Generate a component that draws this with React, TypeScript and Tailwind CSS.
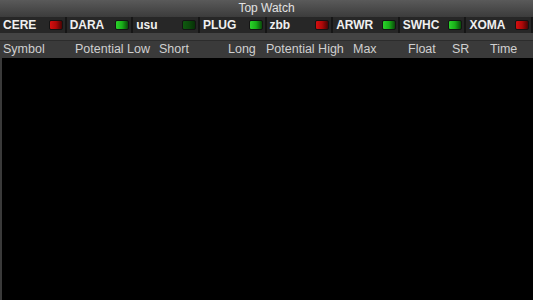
import React from "react";

type Tick = { sym: string; led: "red" | "green" | "dim" };

const ticks: Tick[] = [
  { sym: "CERE", led: "red" },
  { sym: "DARA", led: "green" },
  { sym: "usu", led: "dim" },
  { sym: "PLUG", led: "green" },
  { sym: "zbb", led: "red" },
  { sym: "ARWR", led: "green" },
  { sym: "SWHC", led: "green" },
  { sym: "XOMA", led: "red" },
];

const cols = ["Symbol", "Potential Low", "Short", "Long", "Potential High", "Max", "Float", "SR", "Time"];

function Led({ kind }: { kind: Tick["led"] }) {
  const cls = {
    red: "bg-gradient-to-r from-[#d41010] via-[#b00808] to-[#4a0404]",
    green: "bg-gradient-to-r from-[#2bd22b] via-[#18b018] to-[#0a4a0a]",
    dim: "bg-gradient-to-r from-[#0f5a0f] via-[#0c4a0c] to-[#073007]",
  }[kind];
  return <span className={`block h-[10px] w-[14px] rounded-[2px] border border-[#141414] ${cls}`} />;
}

export default function App() {
  return (
    <div className="flex h-[300px] w-[533px] flex-col overflow-hidden bg-black font-['Liberation_Sans',Arial,sans-serif]">
      <div className="h-[17px] bg-gradient-to-b from-[#5a5a5a] to-[#3c3c3c] text-center text-[12px] leading-[17px] text-[#e2e2e2]">
        Top Watch
      </div>
      <div className="grid h-[16px] grid-cols-8 bg-[#161616]">
        {ticks.map((t) => (
          <div key={t.sym} className="flex items-center justify-between border-r-2 border-[#161616] bg-[#272727] pl-[3px] pr-[2px]">
            <span className="text-[12px] font-bold leading-none text-[#f0f0f0]">{t.sym}</span>
            <Led kind={t.led} />
          </div>
        ))}
      </div>
      <div className="h-[7px] bg-[#444444]" />
      <div className="h-px bg-[#2c2c2c]" />
      <div className="grid h-[17px] grid-cols-[72px_84px_69px_38px_87px_55px_44px_38px_1fr] bg-[#3a3a3a] pl-[3px] text-[12.5px] leading-[17px] text-[#d0d0d0]">
        {cols.map((c) => (
          <span key={c} className="whitespace-nowrap">{c}</span>
        ))}
      </div>
      <div className="flex-1 border-l-2 border-[#3a3a3a] bg-black" />
    </div>
  );
}
